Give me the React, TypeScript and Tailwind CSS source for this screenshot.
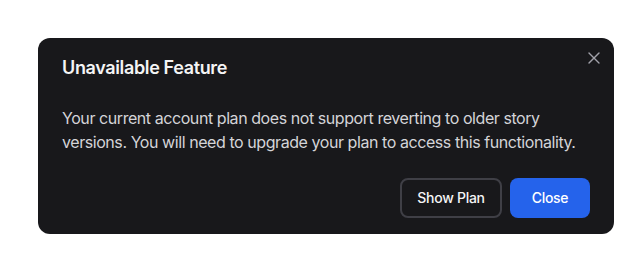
import { X } from "lucide-react";

export default function App() {
  return (
    <div className="min-h-[270px] w-full bg-white pt-[38px] pl-[38px] font-['Inter',sans-serif]">
      <div className="relative w-[576px] rounded-xl bg-[#18181b] px-6 pt-4 pb-4">
        <button className="absolute right-[10px] top-[10px] text-[#a1a1aa]">
          <X size={20} strokeWidth={1.6} />
        </button>
        <h2 className="text-lg leading-7 font-semibold tracking-[-0.02em] text-[#f4f4f5]">Unavailable Feature</h2>
        <p className="mt-6 text-base leading-6 tracking-[-0.027em] text-[#d4d4d8]">
          Your current account plan does not support reverting to older story versions. You will need to
          upgrade your plan to access this functionality.
        </p>
        <div className="mt-6 flex justify-end gap-2">
          <button className="h-10 w-[102px] rounded-lg border-2 border-[#3f3f46] text-sm font-medium tracking-[-0.02em] text-[#f4f4f5]">
            Show Plan
          </button>
          <button className="h-10 w-[80px] rounded-lg bg-[#2563eb] text-sm font-medium tracking-[-0.02em] text-white">
            Close
          </button>
        </div>
      </div>
    </div>
  );
}
